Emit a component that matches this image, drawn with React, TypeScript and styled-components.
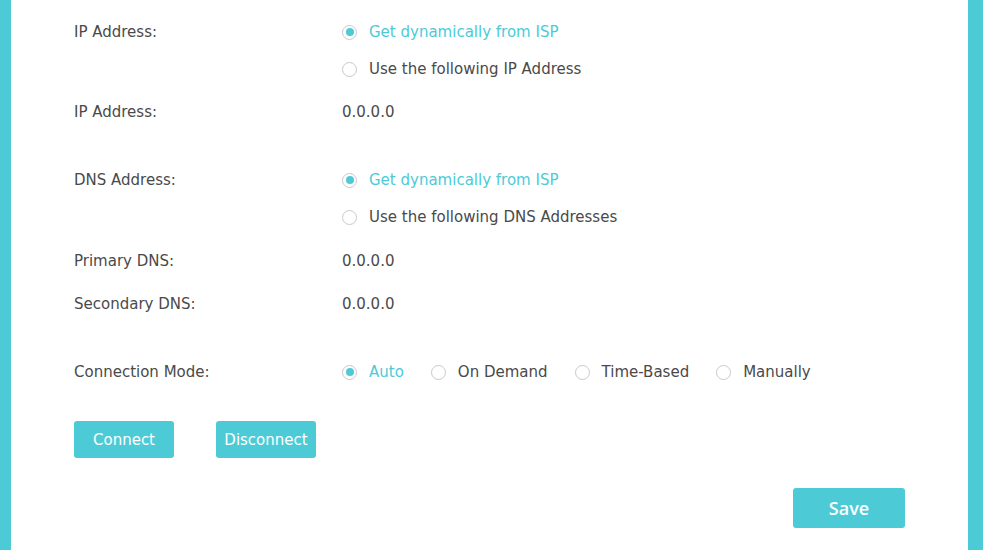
import React, { useState } from 'react';
import styled, { createGlobalStyle } from 'styled-components';

const CYAN = '#4ccbd6';

const GlobalStyle = createGlobalStyle`
  html, body {
    margin: 0;
    padding: 0;
    height: 100%;
    background: ${CYAN};
  }
  #root {
    height: 100%;
  }
`;

const Page = styled.div`
  height: 550px;
  padding: 0 15px 0 11px;
  overflow: hidden;
`;

const Panel = styled.div`
  height: 100%;
  background: #fff;
  padding: 22px 63px 0 63px;
  box-sizing: border-box;
  font-family: 'DejaVu Sans', Verdana, sans-serif;
  font-size: 15px;
  color: #4a4a4a;
`;

const Row = styled.div<{ $gap?: number }>`
  display: grid;
  grid-template-columns: 268px 1fr;
  margin-top: ${(p) => p.$gap ?? 23}px;
  &:first-child {
    margin-top: 0;
  }
`;

const Label = styled.div`
  line-height: 20px;
`;

const Value = styled.div`
  line-height: 20px;
`;

const OptionList = styled.div`
  display: flex;
  flex-direction: column;
  gap: 17px;
`;

const OptionRow = styled.div`
  display: flex;
  gap: 27px;
`;

const Option = styled.label<{ $checked: boolean }>`
  display: flex;
  align-items: center;
  gap: 12px;
  line-height: 20px;
  color: ${(p) => (p.$checked ? CYAN : '#4a4a4a')};
  cursor: pointer;
`;

const Radio = styled.span<{ $checked: boolean }>`
  width: 15px;
  height: 15px;
  box-sizing: border-box;
  border-radius: 50%;
  border: 1.5px solid #c9c9c9;
  display: flex;
  align-items: center;
  justify-content: center;
  flex-shrink: 0;
  &::after {
    content: '';
    width: 8px;
    height: 8px;
    border-radius: 50%;
    background: ${(p) => (p.$checked ? CYAN : 'transparent')};
  }
`;

const Buttons = styled.div`
  display: flex;
  gap: 42px;
  margin-top: 39px;
`;

const Button = styled.button`
  width: 100px;
  height: 37px;
  border: none;
  border-radius: 3px;
  background: ${CYAN};
  color: #fff;
  font-family: 'DejaVu Sans', Verdana, sans-serif;
  font-size: 15px;
  padding: 0;
  cursor: pointer;
`;

const Footer = styled.div`
  display: flex;
  justify-content: flex-end;
  margin-top: 30px;
`;

const SaveButton = styled.button`
  width: 112px;
  height: 40px;
  border: none;
  border-radius: 3px;
  background: ${CYAN};
  color: #fff;
  font-family: 'Open Sans', sans-serif;
  font-weight: 600;
  font-size: 18px;
  padding: 0;
  cursor: pointer;
`;

type RadioGroupProps = {
  options: string[];
  value: string;
  onChange: (v: string) => void;
  inline?: boolean;
};

function RadioGroup({ options, value, onChange, inline }: RadioGroupProps) {
  const List = inline ? OptionRow : OptionList;
  return (
    <List>
      {options.map((opt) => (
        <Option key={opt} $checked={opt === value} onClick={() => onChange(opt)}>
          <Radio $checked={opt === value} />
          {opt}
        </Option>
      ))}
    </List>
  );
}

export default function App() {
  const [ipMode, setIpMode] = useState('Get dynamically from ISP');
  const [dnsMode, setDnsMode] = useState('Get dynamically from ISP');
  const [connMode, setConnMode] = useState('Auto');

  return (
    <Page>
      <GlobalStyle />
      <Panel>
        <Row>
          <Label>IP Address:</Label>
          <RadioGroup
            options={['Get dynamically from ISP', 'Use the following IP Address']}
            value={ipMode}
            onChange={setIpMode}
          />
        </Row>
        <Row>
          <Label>IP Address:</Label>
          <Value>0.0.0.0</Value>
        </Row>
        <Row $gap={48}>
          <Label>DNS Address:</Label>
          <RadioGroup
            options={['Get dynamically from ISP', 'Use the following DNS Addresses']}
            value={dnsMode}
            onChange={setDnsMode}
          />
        </Row>
        <Row $gap={24}>
          <Label>Primary DNS:</Label>
          <Value>0.0.0.0</Value>
        </Row>
        <Row>
          <Label>Secondary DNS:</Label>
          <Value>0.0.0.0</Value>
        </Row>
        <Row $gap={48}>
          <Label>Connection Mode:</Label>
          <RadioGroup
            inline
            options={['Auto', 'On Demand', 'Time-Based', 'Manually']}
            value={connMode}
            onChange={setConnMode}
          />
        </Row>
        <Buttons>
          <Button>Connect</Button>
          <Button>Disconnect</Button>
        </Buttons>
        <Footer>
          <SaveButton>Save</SaveButton>
        </Footer>
      </Panel>
    </Page>
  );
}
